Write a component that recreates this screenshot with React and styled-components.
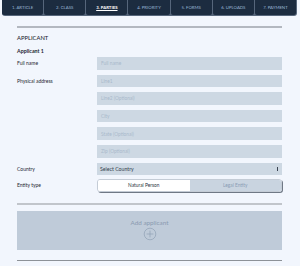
import React from "react";
import styled, { createGlobalStyle } from "styled-components";

const Global = createGlobalStyle`
  html, body {
    margin: 0;
    padding: 0;
    background: #f2f6fd;
    font-family: Lato, "Open Sans", sans-serif;
  }
`;

const Page = styled.div`
  width: 300px;
  height: 266px;
  overflow: hidden;
  background: #f2f6fd;
`;

const TabBar = styled.nav`
  display: flex;
  margin: 0 3px 0 2px;
  height: 16px;
  background: #56667b;
  border-radius: 0 0 3px 3px;
  gap: 1px;
  padding: 0 1px 1px 0;
  box-sizing: border-box;
`;

const Tab = styled.div`
  flex: 1;
  display: flex;
  align-items: center;
  justify-content: center;
  background: #1c2c40;
  color: ${(p) => (p.active ? "#ffffff" : "#9bb8d6")};
  font-size: 4.3px;
  text-transform: uppercase;
  text-decoration: ${(p) => (p.active ? "underline" : "none")};
  font-weight: ${(p) => (p.active ? 700 : 400)};
  border-radius: 0 0 2px 2px;
`;

const Content = styled.main`
  width: 265px;
  margin: 0 0 0 17px;
`;

const Spacer = styled.div`
  height: ${(p) => p.h}px;
`;

const Rule = styled.hr`
  border: none;
  margin: 0;
  height: ${(p) => p.h || 2}px;
  background: ${(p) => p.color || "#b3b8c0"};
`;

const Title = styled.h2`
  margin: 0;
  font-size: 5.8px;
  font-weight: 500;
  color: #1e2632;
  line-height: 8px;
`;

const SubTitle = styled.h3`
  margin: 0;
  font-size: 5.3px;
  font-weight: 700;
  color: #1e2632;
  line-height: 8px;
`;

const FormGrid = styled.div`
  display: grid;
  grid-template-columns: 80px 185px;
  row-gap: 5px;
  align-items: center;
`;

const Label = styled.label`
  font-size: 5px;
  color: #1e2632;
  line-height: 12.6px;
  margin-top: ${(p) => p.shift || 0}px;
`;

const Input = styled.div`
  grid-column: 2;
  height: 12.6px;
  background: #cdd8e3;
  color: #a9b8cb;
  font-size: 4.8px;
  display: flex;
  align-items: center;
  padding-left: 4px;
  box-sizing: border-box;
`;

const Select = styled(Input)`
  color: #323c4b;
  font-size: 5.2px;
  padding-left: 3px;
  justify-content: space-between;
  padding-right: 4px;
`;

const Arrows = styled.span`
  display: flex;
  flex-direction: column;
  gap: 0.5px;
  span {
    width: 1.5px;
    height: 1.5px;
    background: #3a4352;
  }
`;

const Toggle = styled.div`
  grid-column: 2;
  height: 12.4px;
  margin-top: -1px;
  display: flex;
  border: 0.5px solid #c4ccd6;
  border-radius: 3px;
  overflow: hidden;
  box-shadow: 1px 1px 0 #6f7885;
  box-sizing: border-box;
`;

const ToggleOpt = styled.div`
  flex: 1;
  display: flex;
  align-items: center;
  justify-content: center;
  font-size: 4.8px;
  background: ${(p) => (p.active ? "#ffffff" : "#c9d4e0")};
  color: ${(p) => (p.active ? "#2a3340" : "#8a9db5")};
`;

const AddBox = styled.div`
  height: 39px;
  background: #bfcbd9;
  display: flex;
  flex-direction: column;
  align-items: center;
  justify-content: center;
  gap: 1px;
  color: #8a9ab0;
  font-size: 6.3px;
`;

export default function App() {
  const tabs = ["1. Article", "2. Class", "3. Parties", "4. Priority", "5. Forms", "6. Uploads", "7. Payment"];
  return (
    <Page>
      <Global />
      <TabBar>
        {tabs.map((t) => (
          <Tab key={t} active={t === "3. Parties"}>{t}</Tab>
        ))}
      </TabBar>
      <Content>
        <Spacer h={10} />
        <Rule />
        <Spacer h={6} />
        <Title>APPLICANT</Title>
        <Spacer h={5} />
        <SubTitle>Applicant 1</SubTitle>
        <Spacer h={2} />
        <FormGrid>
          <Label>Full name</Label>
          <Input>Full name</Input>
          <Label>Physical address</Label>
          <Input>Line1</Input>
          <Input>Line2 (Optional)</Input>
          <Input>City</Input>
          <Input>State (Optional)</Input>
          <Input>Zip (Optional)</Input>
          <Label>Country</Label>
          <Select>
            Select Country
            <Arrows><span /><span /></Arrows>
          </Select>
          <Label shift={-1}>Entity type</Label>
          <Toggle>
            <ToggleOpt active>Natural Person</ToggleOpt>
            <ToggleOpt>Legal Entity</ToggleOpt>
          </Toggle>
        </FormGrid>
        <Spacer h={11} />
        <Rule color="#c1c5cb" />
        <Spacer h={6} />
        <AddBox>
          Add applicant
          <svg width="14" height="14" viewBox="0 0 14 14">
            <circle cx="7" cy="7" r="5.8" fill="none" stroke="#8fa0b5" strokeWidth="0.7" />
            <path d="M7 3.6V10.4M3.6 7H10.4" stroke="#8fa0b5" strokeWidth="0.7" />
          </svg>
        </AddBox>
        <Spacer h={10} />
        <Rule h={1} color="#8d9298" />
      </Content>
    </Page>
  );
}
